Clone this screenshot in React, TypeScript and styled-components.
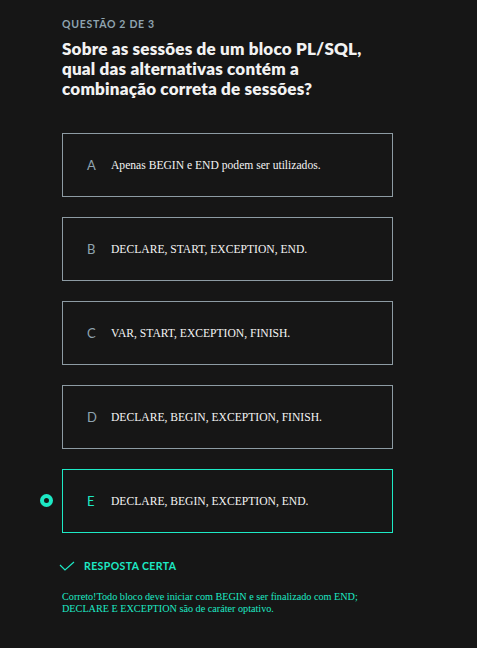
import React from "react";
import styled, { createGlobalStyle } from "styled-components";

const Global = createGlobalStyle`
  html, body { margin: 0; padding: 0; background: #161616; }
  body { width: 477px; height: 648px; overflow: hidden; }
`;

const Page = styled.div`
  width: 477px;
  height: 648px;
  box-sizing: border-box;
  padding: 18px 84px 0 62px;
  background: #161616;
  display: flex;
  flex-direction: column;
`;

const Kicker = styled.div`
  font-family: "Lato", sans-serif;
  font-weight: 700;
  font-size: 10.5px;
  letter-spacing: 0.7px;
  color: #8fa4b0;
  line-height: 12px;
`;

const Title = styled.h1`
  margin: 9px 0 0 0;
  font-family: "Lato", sans-serif;
  font-weight: 800;
  font-size: 17px;
  line-height: 20px;
  color: #f2f2f2;
  letter-spacing: 0.2px;
`;

const Options = styled.div`
  margin-top: 34px;
  display: flex;
  flex-direction: column;
  gap: 20px;
`;

const OptionRow = styled.div`
  position: relative;
`;

const Box = styled.div<{ $selected?: boolean }>`
  height: 64px;
  box-sizing: border-box;
  border: 1px solid ${(p) => (p.$selected ? "#1de9c5" : "#8d9ba3")};
  display: flex;
  align-items: center;
  padding-left: 24px;
`;

const Letter = styled.span<{ $selected?: boolean }>`
  font-family: "Lato", sans-serif;
  font-size: 13px;
  width: 24px;
  color: ${(p) => (p.$selected ? "#1de9c5" : "#8fa4b0")};
`;

const OptText = styled.span`
  font-family: "Liberation Serif", serif;
  font-size: 11.6px;
  color: #f4f4f4;
`;

const Radio = styled.span`
  position: absolute;
  left: -22px;
  top: 25px;
  width: 13px;
  height: 13px;
  box-sizing: border-box;
  border-radius: 50%;
  border: 4px solid #1de9c5;
`;

const Result = styled.div`
  margin-top: 27px;
  display: flex;
  align-items: center;
  gap: 9px;
  margin-left: -3px;
`;

const ResultLabel = styled.span`
  font-family: "Lato", sans-serif;
  font-weight: 700;
  font-size: 10.5px;
  letter-spacing: 0.4px;
  color: #1de9c5;
`;

const Explanation = styled.p`
  margin: 19px 0 0 0;
  font-family: "Liberation Serif", serif;
  font-size: 10.2px;
  line-height: 12px;
  color: #1de9c5;
  width: 330px;
`;

const options = [
  { l: "A", t: "Apenas BEGIN e END podem ser utilizados." },
  { l: "B", t: "DECLARE, START, EXCEPTION, END." },
  { l: "C", t: "VAR, START, EXCEPTION, FINISH." },
  { l: "D", t: "DECLARE, BEGIN, EXCEPTION, FINISH." },
  { l: "E", t: "DECLARE, BEGIN, EXCEPTION, END.", sel: true },
];

export default function App() {
  return (
    <>
      <Global />
      <Page>
        <Kicker>QUESTÃO 2 DE 3</Kicker>
        <Title>
          Sobre as sessões de um bloco PL/SQL,
          <br />
          qual das alternativas contém a
          <br />
          combinação correta de sessões?
        </Title>
        <Options>
          {options.map((o) => (
            <OptionRow key={o.l}>
              {o.sel && <Radio />}
              <Box $selected={o.sel}>
                <Letter $selected={o.sel}>{o.l}</Letter>
                <OptText>{o.t}</OptText>
              </Box>
            </OptionRow>
          ))}
        </Options>
        <Result>
          <svg width="16" height="10" viewBox="0 0 16 10">
            <path d="M1 4 L6 9 L15 1" fill="none" stroke="#1de9c5" strokeWidth="1.2" />
          </svg>
          <ResultLabel>RESPOSTA CERTA</ResultLabel>
        </Result>
        <Explanation>
          Correto!Todo bloco deve iniciar com BEGIN e ser finalizado com END;
          <br />
          DECLARE E EXCEPTION são de caráter optativo.
        </Explanation>
      </Page>
    </>
  );
}
